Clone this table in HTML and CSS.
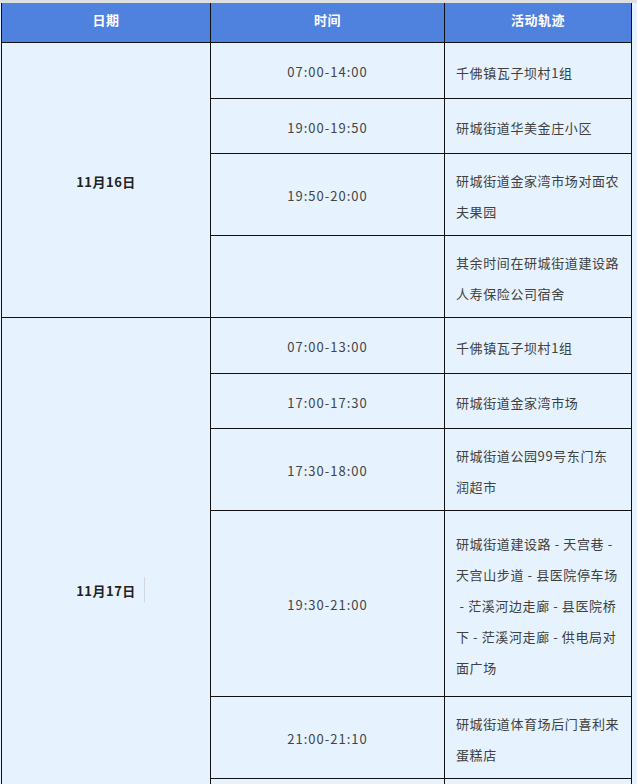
FILE: index.html
```html
<!DOCTYPE html>
<html lang="zh-CN">
<head>
<meta charset="utf-8">
<title>活动轨迹</title>
<link rel="stylesheet" href="styles.css">
</head>
<body>
<div class="topbar"></div>
<div class="wrap">
<table class="track">
  <colgroup>
    <col class="c-date">
    <col class="c-time">
    <col class="c-place">
  </colgroup>
  <thead>
    <tr class="head">
      <th>日期</th>
      <th>时间</th>
      <th>活动轨迹</th>
    </tr>
  </thead>
  <tbody>
    <tr class="r1">
      <td class="date" rowspan="4">11月16日</td>
      <td class="time">07:00-14:00</td>
      <td class="place">千佛镇瓦子坝村1组</td>
    </tr>
    <tr class="r1b">
      <td class="time">19:00-19:50</td>
      <td class="place">研城街道华美金庄小区</td>
    </tr>
    <tr class="r2">
      <td class="time">19:50-20:00</td>
      <td class="place">研城街道金家湾市场对面农<br>夫果园</td>
    </tr>
    <tr class="r2">
      <td class="time"></td>
      <td class="place">其余时间在研城街道建设路<br>人寿保险公司宿舍</td>
    </tr>
    <tr class="r1">
      <td class="date" rowspan="6"><span class="mark">11月17日</span></td>
      <td class="time">07:00-13:00</td>
      <td class="place">千佛镇瓦子坝村1组</td>
    </tr>
    <tr class="r1b">
      <td class="time">17:00-17:30</td>
      <td class="place">研城街道金家湾市场</td>
    </tr>
    <tr class="r2">
      <td class="time">17:30-18:00</td>
      <td class="place">研城街道公园99号东门东<br>润超市</td>
    </tr>
    <tr class="r5">
      <td class="time">19:30-21:00</td>
      <td class="place">研城街道建设路 - 天宫巷 -<br>天宫山步道 - 县医院停车场<br>&nbsp;- 茫溪河边走廊 - 县医院桥<br>下 - 茫溪河走廊 - 供电局对<br>面广场</td>
    </tr>
    <tr class="r2">
      <td class="time">21:00-21:10</td>
      <td class="place">研城街道体育场后门喜利来<br>蛋糕店</td>
    </tr>
    <tr class="r2">
      <td class="time"></td>
      <td class="place">其余时间在研城街道建设路<br>人寿保险公司宿舍</td>
    </tr>
  </tbody>
</table>
</div>
</body>
</html>
```

FILE: styles.css
```css
html, body {
  margin: 0;
  padding: 0;
  background: #e6f3ff;
}
body {
  font-family: "Noto Sans CJK SC", "Noto Sans", sans-serif;
  font-size: 13px;
  color: #404040;
}
.topbar {
  height: 3px;
  background: #dedfe0;
}
.wrap {
  padding-left: 1px;
}
.track {
  border-collapse: collapse;
  table-layout: fixed;
  width: 630px;
  background: #e6f3ff;
}
.c-date { width: 209px; }
.c-time { width: 234px; }
.c-place { width: 187px; }

.track th,
.track td {
  border: 1px solid #111;
  vertical-align: middle;
  padding: 0;
}
.head {
  height: 39px;
}
.track th {
  border-top: none;
  background: #4f81df;
  color: #fff;
  font-weight: bold;
  font-size: 13px;
  letter-spacing: 0.5px;
  padding-bottom: 6px;
}
.r1 { height: 56px; }
.r1b { height: 55px; }
.r2 { height: 82px; }
.r5 { height: 186px; }

.track .time {
  text-align: center;
  letter-spacing: 1px;
  color: #444;
  padding-top: 3px;
}
.track .place {
  text-align: left;
  line-height: 31px;
  letter-spacing: 0.6px;
  padding: 4px 6px 0 11px;
  white-space: nowrap;
}
.track .date {
  text-align: center;
  font-weight: bold;
  letter-spacing: 0.5px;
  color: #222;
  padding-top: 4px;
}
.mark {
  position: relative;
}
.mark::after {
  content: "";
  position: absolute;
  left: calc(100% + 8px);
  top: -4px;
  width: 1px;
  height: 25px;
  background: #d2d8de;
}
```
